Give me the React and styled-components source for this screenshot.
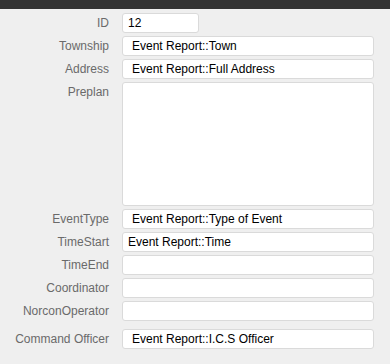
import React from 'react';
import styled, { createGlobalStyle } from 'styled-components';

const GlobalStyle = createGlobalStyle`
  html, body {
    margin: 0;
    padding: 0;
    background: #efefef;
  }
  body {
    font-family: "Liberation Sans", Arial, sans-serif;
  }
`;

const TopBar = styled.div`
  height: 9px;
  background-color: #333333;
`;

const Form = styled.div`
  display: flex;
  flex-direction: column;
  gap: 3px;
  padding: 4px 16px 16px 0;
`;

const Row = styled.div`
  display: flex;
  align-items: flex-start;
  margin-top: ${(p) => (p.spaced ? '5px' : '0')};
`;

const Label = styled.div`
  width: 109px;
  flex-shrink: 0;
  text-align: right;
  font-size: 12px;
  line-height: 20px;
  color: #6a6a6a;
  margin-right: 13px;
`;

const Field = styled.div`
  box-sizing: border-box;
  width: ${(p) => (p.narrow ? '77px' : '252px')};
  height: ${(p) => (p.tall ? '124px' : '20px')};
  background-color: #ffffff;
  border: 1px solid #dadada;
  border-radius: 3px;
  padding-left: ${(p) => (p.tight ? '5px' : '9px')};
  font-size: 12px;
  line-height: 18px;
  color: #000000;
  white-space: nowrap;
  overflow: hidden;
`;

const rows = [
  { label: 'ID', value: '12', narrow: true, tight: true },
  { label: 'Township', value: 'Event Report::Town' },
  { label: 'Address', value: 'Event Report::Full Address' },
  { label: 'Preplan', value: '', tall: true },
  { label: 'EventType', value: 'Event Report::Type of Event' },
  { label: 'TimeStart', value: 'Event Report::Time', tight: true },
  { label: 'TimeEnd', value: '' },
  { label: 'Coordinator', value: '' },
  { label: 'NorconOperator', value: '' },
  { label: 'Command Officer', value: 'Event Report::I.C.S Officer', spaced: true },
];

const App = () => (
  <>
    <GlobalStyle />
    <TopBar />
    <Form>
      {rows.map((r) => (
        <Row key={r.label} spaced={r.spaced}>
          <Label>{r.label}</Label>
          <Field narrow={r.narrow} tall={r.tall} tight={r.tight}>
            {r.value}
          </Field>
        </Row>
      ))}
    </Form>
  </>
);

export default App;
